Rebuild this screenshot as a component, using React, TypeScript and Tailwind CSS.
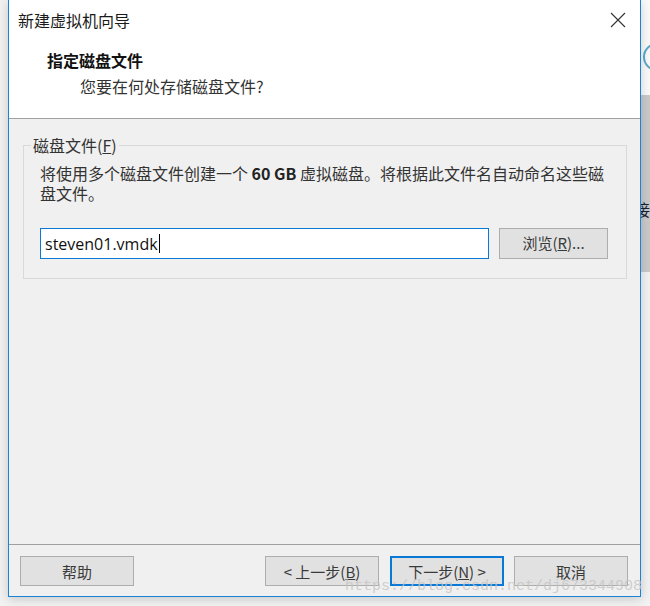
const cjk = "'Noto Sans CJK SC', 'Noto Sans', sans-serif";

function Btn({
  children,
  primary,
  className = '',
}: {
  children: React.ReactNode;
  primary?: boolean;
  className?: string;
}) {
  return (
    <button
      type="button"
      className={`h-[30px] w-[114px] bg-[#e1e1e1] text-[15px] leading-none text-[#3a3a3a] ${
        primary ? 'border-2 border-[#0a78d7]' : 'border border-[#adadad]'
      } ${className}`}
    >
      {children}
    </button>
  );
}

export default function App() {
  return (
    <div
      className="relative h-[606px] w-[650px] overflow-hidden bg-[#f2f2f2]"
      style={{ fontFamily: cjk }}
    >
      {/* desktop behind the dialog */}
      <div className="absolute left-[641px] top-0 h-[95px] w-[9px] bg-[#fafafa]" />
      <div className="absolute left-[643px] top-[43px] h-[28px] w-[28px] rounded-full border-2 border-[#5fa9c9]" />
      <div className="absolute left-[641px] top-[95px] h-[177px] w-[9px] overflow-hidden bg-[#c9c9c9]">
        <span className="absolute left-[-7px] top-[106px] text-[16px] leading-none text-[#1a2030]">接</span>
      </div>

      {/* dialog window */}
      <div className="absolute left-[8px] top-0 flex h-[597px] w-[633px] flex-col border border-t-0 border-[#1883d7] bg-[#f0f0f0] shadow-[0_2px_10px_rgba(0,0,0,0.18)]">
        <div className="flex h-[119px] flex-col border-b border-[#a0a0a0] bg-white">
          <div className="flex h-[40px] items-center justify-between pl-[9px] pr-[14px]">
            <span className="text-[16px] text-[#1a1a1a]">新建虚拟机向导</span>
            <svg width="16" height="16" viewBox="0 0 16 16" fill="none" stroke="#333" strokeWidth="1.1">
              <path d="M1 1 15 15M15 1 1 15" />
            </svg>
          </div>
          <div className="pl-[38px] pt-[8px] text-[16px] font-bold leading-[24px] text-[#111]">
            指定磁盘文件
          </div>
          <div className="pl-[71px] pt-[2px] text-[16px] leading-[24px] text-[#333]">
            您要在何处存储磁盘文件?
          </div>
        </div>

        <div className="flex flex-1 flex-col">
          <fieldset className="ml-[14px] mr-[13px] mt-[16px] border border-[#d9d9d9] pb-[19px] pl-[16px] pr-[18px]">
            <legend className="-ml-[9px] px-[2px] text-[16px] leading-[20px] text-[#333]">
              磁盘文件(<span className="underline">F</span>)
            </legend>
            <p className="mt-[8px] text-[16px] leading-[20px] text-[#333]">
              将使用多个磁盘文件创建一个 <b className="font-semibold text-[#222]">60 GB</b> 虚拟磁盘。将根据此文件名自动命名这些磁盘文件。
            </p>
            <div className="mt-[25px] flex gap-[10px]">
              <div className="flex h-[31px] w-[449px] items-center border border-[#0a78d7] bg-white px-[4px]">
                <span className="text-[16px] text-[#111]" style={{ fontFamily: "'Open Sans', 'Noto Sans', sans-serif" }}>
                  steven01.vmdk
                </span>
                <span className="ml-[1px] h-[19px] w-px bg-black" />
              </div>
              <button
                type="button"
                className="h-[31px] w-[109px] border border-[#adadad] bg-[#e1e1e1] text-[15px] text-[#3a3a3a]"
              >
                浏览(<span className="underline">R</span>)...
              </button>
            </div>
          </fieldset>
        </div>

        <div className="flex h-[52px] items-start border-t border-[#a0a0a0] pl-[11px] pr-[12px] pt-[11px]">
          <Btn>帮助</Btn>
          <div className="flex-1" />
          <Btn className="mr-[11px]">
            &lt; 上一步(<span className="underline">B</span>)
          </Btn>
          <Btn primary className="mr-[10px]">
            下一步(<span className="underline">N</span>) &gt;
          </Btn>
          <Btn>取消</Btn>
        </div>
      </div>

      {/* watermark */}
      <div
        className="pointer-events-none absolute left-[345px] top-[578px] text-[15px] leading-[18px] text-[#c4c4c4]/80"
        style={{ fontFamily: "'Liberation Mono', monospace" }}
      >
        https://blog.csdn.net/dj673344908
      </div>
    </div>
  );
}
